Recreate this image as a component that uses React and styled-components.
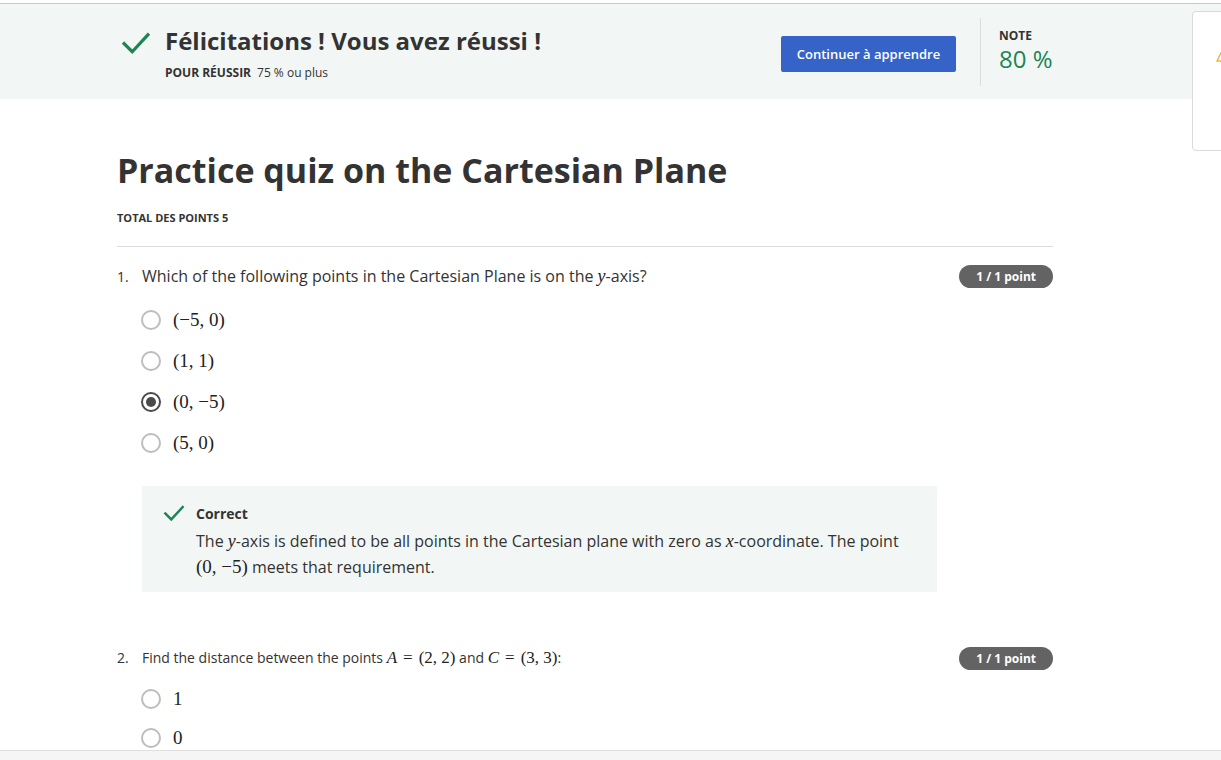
import React from "react";
import styled, { createGlobalStyle } from "styled-components";

const GlobalStyle = createGlobalStyle`
  html, body { margin: 0; padding: 0; background: #fff; }
  body { font-family: "Open Sans", "Liberation Sans", sans-serif; color: #1f1f1f; }
  * { box-sizing: border-box; }
`;

const Page = styled.div`
  position: relative;
  width: 1221px;
  height: 760px;
  overflow: hidden;
  padding-top: 3px;
  display: flex;
  flex-direction: column;
`;

const Banner = styled.header`
  border-top: 1px solid #c9c9c9;
  background: #f2f7f5;
  height: 96px;
  padding-left: 117px;
  display: flex;
  align-items: center;
`;

const BannerInner = styled.div`
  width: 936px;
  display: flex;
  align-items: center;
`;

const Result = styled.div`
  flex: 1;
  display: flex;
  align-items: flex-start;
  gap: 14px;
  padding-left: 4px;
  margin-top: 2px;
`;

const CheckMark = styled.svg`
  flex: none;
  width: ${(p) => p.$size}px;
  height: ${(p) => p.$size}px;
  margin-top: ${(p) => p.$top || 0}px;
`;

const ResultText = styled.div`
  display: flex;
  flex-direction: column;
`;

const ResultTitle = styled.h2`
  margin: 0;
  font-size: 24px;
  line-height: 32px;
  font-weight: 700;
  color: #333;
`;

const Requirement = styled.div`
  margin-top: 8px;
  font-size: 12px;
  line-height: 16px;
  color: #333;
  display: flex;
  gap: 6px;
`;

const SmallCaps = styled.span`
  font-weight: 700;
  text-transform: uppercase;
`;

const PrimaryButton = styled.button`
  width: 175px;
  height: 36px;
  margin-top: 4px;
  border: none;
  border-radius: 2px;
  background: #3563c7;
  color: #fff;
  font-family: inherit;
  font-size: 13px;
  font-weight: 600;
  cursor: pointer;
`;

const VDivider = styled.div`
  width: 1px;
  height: 68px;
  background: #dcdcdc;
  margin: 0 18px 0 24px;
`;

const Grade = styled.div`
  width: 54px;
  display: flex;
  flex-direction: column;
  gap: 2px;
  margin-top: -2px;
`;

const GradeLabel = styled.div`
  font-size: 12px;
  line-height: 15px;
  font-weight: 700;
  color: #333;
`;

const GradeValue = styled.div`
  font-size: 24px;
  line-height: 28px;
  color: #1f8354;
`;

const SideCard = styled.aside`
  position: absolute;
  left: 1192px;
  top: 11px;
  width: 80px;
  height: 140px;
  background: #fff;
  border: 1px solid #dadada;
  border-radius: 4px;
  padding: 33px 0 0 23px;
`;

const Main = styled.main`
  padding-left: 117px;
  width: 1053px;
  flex: 1;
`;

const Title = styled.h1`
  margin: 49px 0 0;
  font-size: 34px;
  line-height: 44px;
  font-weight: 700;
  color: #333;
`;

const TotalPoints = styled.div`
  margin-top: 18px;
  font-size: 11px;
  line-height: 16px;
  font-weight: 700;
  color: #333;
  text-transform: uppercase;
`;

const Rule = styled.hr`
  margin: 20px 0 0;
  border: none;
  border-top: 1px solid #dcdcdc;
`;

const Question = styled.section`
  margin-top: ${(p) => p.$top}px;
`;

const QuestionHead = styled.div`
  display: flex;
  align-items: center;
  justify-content: space-between;
`;

const Prompt = styled.div`
  display: flex;
  align-items: baseline;
  font-size: ${(p) => p.$size}px;
  line-height: 24px;
  color: #333;
`;

const QNumber = styled.span`
  width: 25px;
  flex: none;
  font-size: 14px;
`;

const Badge = styled.span`
  height: 23px;
  padding: 0 17px;
  border-radius: 12px;
  background: #636363;
  color: #fff;
  font-size: 12px;
  font-weight: 700;
  line-height: 23px;
`;

const Options = styled.div`
  margin-top: ${(p) => p.$top}px;
  padding-left: 24px;
  display: flex;
  flex-direction: column;
  gap: ${(p) => p.$gap}px;
`;

const Option = styled.label`
  display: flex;
  align-items: center;
  gap: 12px;
  height: 24px;
`;

const Radio = styled.span`
  width: 20px;
  height: 20px;
  flex: none;
  border-radius: 50%;
  border: 2px solid ${(p) => (p.$checked ? "#4a4a4a" : "#bdbdbd")};
  display: flex;
  align-items: center;
  justify-content: center;
  &::after {
    content: "";
    width: 10px;
    height: 10px;
    border-radius: 50%;
    background: ${(p) => (p.$checked ? "#4a4a4a" : "transparent")};
  }
`;

const Math = styled.span`
  font-family: "Liberation Serif", "DejaVu Serif", serif;
  font-size: ${(p) => p.$size || 19}px;
  color: #222;
  white-space: nowrap;
`;

const Var = styled.i`
  font-style: italic;
`;

const Rel = styled.span`
  margin: 0 6px;
`;

const Feedback = styled.div`
  margin: 31px 0 0 25px;
  width: 795px;
  background: #f2f7f5;
  padding: 16px 20px 12px 21px;
  display: flex;
  gap: 11px;
`;

const FeedbackBody = styled.div`
  display: flex;
  flex-direction: column;
`;

const FeedbackTitle = styled.div`
  font-size: 14px;
  font-weight: 700;
  line-height: 24px;
  color: #333;
`;

const FeedbackText = styled.p`
  margin: 3px 0 0;
  font-size: 16px;
  line-height: 25px;
  color: #333;
`;

const BottomBar = styled.div`
  position: absolute;
  left: 0;
  right: 0;
  bottom: 0;
  height: 10px;
  background: #f5f5f5;
  border-top: 1px solid #dedede;
`;

const Check = ({ size, top }) => (
  <CheckMark $size={size} $top={top} viewBox="0 0 24 24" fill="none">
    <path d="M2.5 12.5 L9 19 L21.5 5.5" stroke="#1f8354" strokeWidth="2.6" strokeLinecap="square" />
  </CheckMark>
);

const q1Options = [
  { label: "(−5, 0)", checked: false },
  { label: "(1, 1)", checked: false },
  { label: "(0, −5)", checked: true },
  { label: "(5, 0)", checked: false },
];

export default function App() {
  return (
    <>
      <GlobalStyle />
      <Page>
        <Banner>
          <BannerInner>
            <Result>
              <Check size={30} top={3} />
              <ResultText>
                <ResultTitle>Félicitations ! Vous avez réussi !</ResultTitle>
                <Requirement>
                  <SmallCaps>Pour réussir</SmallCaps>
                  <span>75 % ou plus</span>
                </Requirement>
              </ResultText>
            </Result>
            <PrimaryButton>Continuer à apprendre</PrimaryButton>
            <VDivider />
            <Grade>
              <GradeLabel>NOTE</GradeLabel>
              <GradeValue>80 %</GradeValue>
            </Grade>
          </BannerInner>
        </Banner>
        <SideCard>
          <svg width="10" height="10" viewBox="0 0 10 10">
            <path d="M5 1 L9 9 L1 9 Z" fill="none" stroke="#f0b240" strokeWidth="1.4" />
          </svg>
        </SideCard>

        <Main>
          <Title>Practice quiz on the Cartesian Plane</Title>
          <TotalPoints>Total des points 5</TotalPoints>
          <Rule />

          <Question $top={17}>
            <QuestionHead>
              <Prompt $size={16}>
                <QNumber>1.</QNumber>
                <span>
                  Which of the following points in the Cartesian Plane is on the <Math $size={18}><Var>y</Var></Math>-axis?
                </span>
              </Prompt>
              <Badge>1 / 1 point</Badge>
            </QuestionHead>
            <Options $top={19} $gap={17}>
              {q1Options.map((o) => (
                <Option key={o.label}>
                  <Radio $checked={o.checked} />
                  <Math>{o.label}</Math>
                </Option>
              ))}
            </Options>
            <Feedback>
              <Check size={22} />
              <FeedbackBody>
                <FeedbackTitle>Correct</FeedbackTitle>
                <FeedbackText>
                  The <Math $size={18}><Var>y</Var></Math>-axis is defined to be all points in the Cartesian plane with zero as <Math $size={18}><Var>x</Var></Math>-coordinate. The point
                  <br />
                  <Math $size={19}>(0, −5)</Math> meets that requirement.
                </FeedbackText>
              </FeedbackBody>
            </Feedback>
          </Question>

          <Question $top={54}>
            <QuestionHead>
              <Prompt $size={14}>
                <QNumber>2.</QNumber>
                <span>
                  Find the distance between the points <Math $size={17}><Var>A</Var><Rel>=</Rel>(2, 2)</Math> and <Math $size={17}><Var>C</Var><Rel>=</Rel>(3, 3)</Math>:
                </span>
              </Prompt>
              <Badge>1 / 1 point</Badge>
            </QuestionHead>
            <Options $top={17} $gap={15}>
              <Option>
                <Radio />
                <Math>1</Math>
              </Option>
              <Option>
                <Radio />
                <Math>0</Math>
              </Option>
            </Options>
          </Question>
        </Main>
        <BottomBar />
      </Page>
    </>
  );
}
